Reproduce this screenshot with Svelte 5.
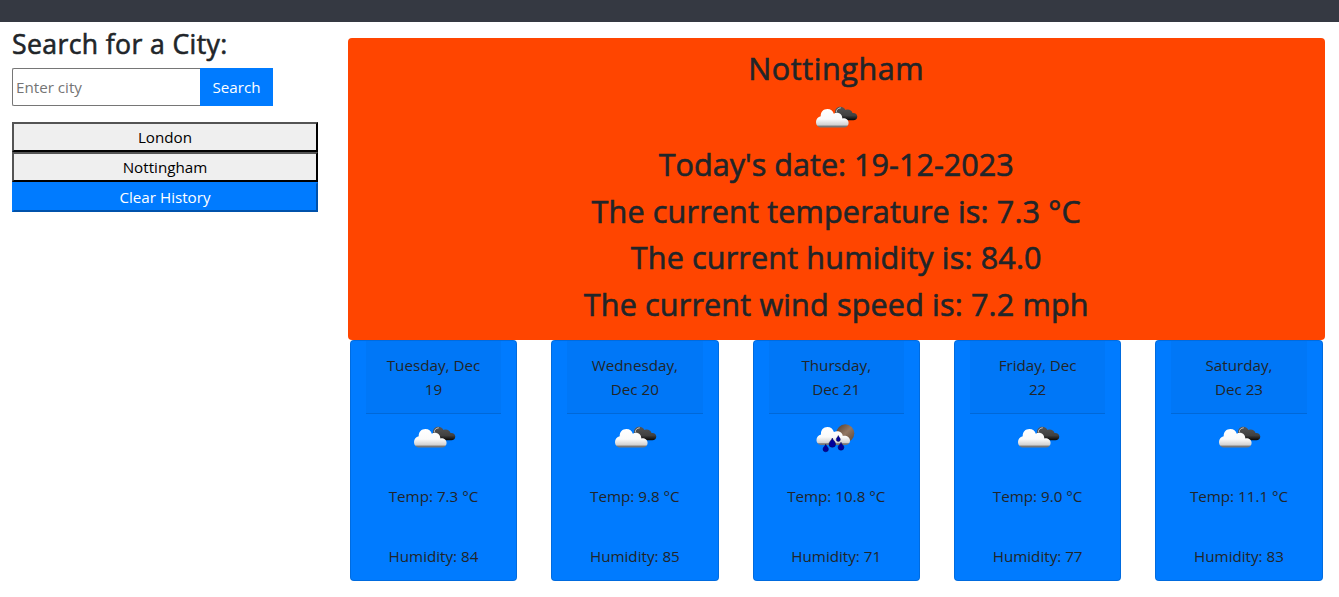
<script>
  const history = ['London', 'Nottingham'];
  const current = [
    "Today's date: 19-12-2023",
    'The current temperature is: 7.3 °C',
    'The current humidity is: 84.0',
    'The current wind speed is: 7.2 mph'
  ];
  const days = [
    { date: ['Tuesday, Dec', '19'], icon: 'clouds', temp: '7.3', humidity: 84 },
    { date: ['Wednesday,', 'Dec 20'], icon: 'clouds', temp: '9.8', humidity: 85 },
    { date: ['Thursday,', 'Dec 21'], icon: 'rain', temp: '10.8', humidity: 71 },
    { date: ['Friday, Dec', '22'], icon: 'clouds', temp: '9.0', humidity: 77 },
    { date: ['Saturday,', 'Dec 23'], icon: 'clouds', temp: '11.1', humidity: 83 }
  ];
</script>

<svg class="defs" width="0" height="0" aria-hidden="true">
  <linearGradient id="white" x1="0" y1="0" x2="0" y2="1">
    <stop offset="0" stop-color="#fff" /><stop offset=".55" stop-color="#fafafa" />
    <stop offset=".86" stop-color="#d2d2d2" /><stop offset=".93" stop-color="#777" /><stop offset="1" stop-color="#777" />
  </linearGradient>
  <linearGradient id="dark" x1="0" y1="0" x2="0" y2="1">
    <stop offset="0" stop-color="#555" /><stop offset=".65" stop-color="#404040" /><stop offset="1" stop-color="#050505" />
  </linearGradient>
  <linearGradient id="moon" x1="0" y1="0" x2="1" y2="1">
    <stop offset="0" stop-color="#4e3a2d" /><stop offset=".5" stop-color="#927763" /><stop offset="1" stop-color="#5b4433" />
  </linearGradient>
</svg>

{#snippet weather(kind)}
  <svg class="weather" viewBox="0 0 50 50" width="50" height="50">
    {#if kind === 'clouds'}
      <path fill="url(#dark)" d="M24 20C23.8 16 26 13.7 29.2 13.7C31.8 13.7 33.7 15 34.5 17C37.5 15.7 40.8 17.2 41.5 20C44.3 19.6 46.3 21.4 46.3 23.5C46.3 25.7 44.7 27.2 42.4 27.2H29Z" />
      <path fill="none" stroke="#ccc" stroke-width=".9" d="M25.2 19.5C25.2 16.7 27 15 29.8 14.8" />
      <path fill="url(#white)" d="M10.2 34.5C7 34.5 5 32 5 29C5 26 7 23.7 9.7 23.2C9.5 18.8 12.5 16 16.4 16C19.7 16 22 18 22.8 20.8C26.4 18.4 31.3 20.5 31.3 25.4C34.8 24.9 37.6 27 37.6 30C37.6 32.7 35.6 34.5 33 34.5Z" />
    {:else}
      <circle cx="34.3" cy="20.3" r="9" fill="url(#moon)" />
      <path fill="url(#white)" d="M10.5 32C7.5 32 5.5 29.7 5.5 27C5.5 24.2 7.3 22 10 21.5C9.5 17 12.5 14 16.4 14C19.6 14 22 16 22.9 18.9C27 17 31.5 19.2 31.8 23C35.8 22.3 39 24.6 39 27.7C39 30.2 37 32 34.5 32Z" />
      <g fill="#00009c" stroke="#050550" stroke-width=".5">
        <path d="M14.7 31.3C15.2 33 17.4 34.4 17.4 36.1A2.7 2.7 0 0 1 12 36.1C12 34.4 14.2 33 14.7 31.3Z" />
        <path d="M21.3 25C22 27.5 24.6 28.7 24.6 31A3.3 3.3 0 0 1 18 31C18 28.7 20.6 27.5 21.3 25Z" />
        <path d="M27.3 22.6C27.7 24.1 29.3 25 29.3 26.5A2 2 0 0 1 25.3 26.5C25.3 25 26.9 24.1 27.3 22.6Z" />
        <path d="M30 29.2C30.5 31.2 32.9 32.5 32.9 34.3A2.9 2.9 0 0 1 27.1 34.3C27.1 32.5 29.5 31.2 30 29.2Z" />
      </g>
    {/if}
  </svg>
{/snippet}

<header></header>
<main>
  <aside>
    <h3>Search for a City:</h3>
    <form onsubmit={(e) => e.preventDefault()}>
      <input type="text" placeholder="Enter city" />
      <button class="search" type="submit">Search</button>
    </form>
    <div class="history">
      {#each history as city}<button>{city}</button>{/each}
      <button class="clear">Clear History</button>
    </div>
  </aside>
  <section>
    <div class="today">
      <h2 class="place">Nottingham</h2>
      {@render weather('clouds')}
      {#each current as line, i}<h2 class:day={i === 0}>{line}</h2>{/each}
    </div>
    <div class="forecast">
      {#each days as day}
        <article>
          <div class="date">{day.date[0]}<br />{day.date[1]}</div>
          {@render weather(day.icon)}
          <p>Temp: {day.temp} °C</p>
          <p class="humidity">Humidity: {day.humidity}</p>
        </article>
      {/each}
    </div>
  </section>
</main>

<style>
  :global(body) {
    margin: 0;
    background: #fff;
    color: #212529;
    font: 15.2px/24px 'Open Sans', 'Noto Sans', sans-serif;
  }
  * { box-sizing: border-box; }
  .defs { position: absolute; }
  header { height: 22px; background: #353942; }
  main { display: flex; }
  aside { width: 318px; padding: 5px 0 0 12px; }
  h2, h3 { font-weight: 500; -webkit-text-stroke: .6px currentColor; }
  h3 { margin: 0; height: 41px; font-size: 26.6px; line-height: 34px; letter-spacing: .38px; }
  form { display: flex; height: 38px; }
  input {
    width: 188px; margin: 0; padding: 1px 2px 1px 3px; font: inherit;
    border: 1px solid #767676; border-right-width: 0; border-radius: 2px 0 0 2px; background: #fff;
  }
  input::placeholder { color: #757575; opacity: 1; }
  button { margin: 0; font: inherit; color: #000; }
  .search { width: 73px; border: 0; padding: 0; background: #007bff; color: #fff; }
  .history { display: flex; flex-direction: column; padding-top: 16px; }
  .history button { height: 30px; padding: 1px 6px; background: #efefef; border: 2px outset #000; }
  .history .clear { background: #007bff; color: #fff; border-color: #007bff; }
  section { width: 977px; margin: 16px 0 0 29.75px; }
  .today {
    height: 302px; padding-top: 11.2px; background: #ff4500; border-radius: 4px;
    display: flex; flex-direction: column; align-items: center;
  }
  h2 { margin: 0 0 8px; font-size: 30.6px; line-height: 38.4px; letter-spacing: .14px; white-space: nowrap; }
  .place { letter-spacing: .55px; }
  .day { letter-spacing: 0; }
  .weather { display: block; flex: none; }
  .today .weather { margin: -2.6px 0 2.4px; }
  .forecast { display: flex; justify-content: space-between; padding: 0 2px; }
  article {
    width: 167.5px; height: 241px; padding: 0 15px; text-align: center;
    background: #007bff; border: 1px solid rgba(0, 0, 0, .125); border-radius: 4px;
    display: flex; flex-direction: column; align-items: center;
  }
  .date { align-self: stretch; height: 73px; padding-top: 12px; background: rgba(0, 0, 0, .03); border-bottom: 1px solid rgba(0, 0, 0, .125); }
  article .weather { margin-top: -1px; }
  p { margin: 21px 0 0; }
  .humidity { margin-top: 36px; }
</style>
